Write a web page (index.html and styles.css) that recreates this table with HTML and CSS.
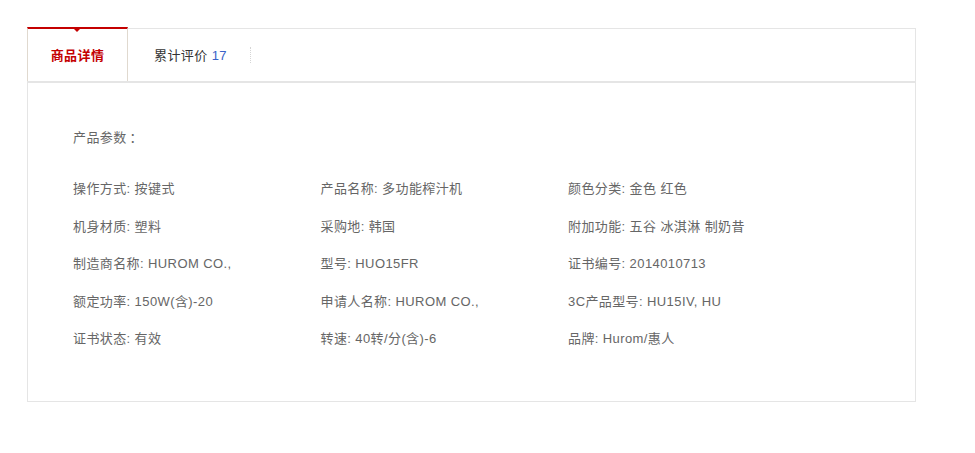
FILE: index.html
```html
<!DOCTYPE html>
<html lang="zh-CN">
<head>
  <meta charset="UTF-8" />
  <title>商品详情</title>
  <link rel="stylesheet" href="styles.css">
</head>
<body>
  <div class="detail">
    <!-- Tab bar -->
    <div class="tabs">
      <a class="tab active">商品详情</a>
      <a class="tab">累计评价 <em class="count">17</em></a>
      <span class="tab-sep"></span>
    </div>

    <!-- Product parameters -->
    <div class="params">
      <p class="params-title">产品参数<span class="colon">：</span></p>
      <ul class="params-list">
        <li>操作方式: 按键式</li>
        <li>产品名称: 多功能榨汁机</li>
        <li>颜色分类: 金色 红色</li>
        <li>机身材质: 塑料</li>
        <li>采购地: 韩国</li>
        <li>附加功能: 五谷 冰淇淋 制奶昔</li>
        <li>制造商名称: HUROM CO.,</li>
        <li>型号: HUO15FR</li>
        <li>证书编号: 2014010713</li>
        <li>额定功率: 150W(含)-20</li>
        <li>申请人名称: HUROM CO.,</li>
        <li>3C产品型号: HU15IV, HU</li>
        <li>证书状态: 有效</li>
        <li>转速: 40转/分(含)-6</li>
        <li>品牌: Hurom/惠人</li>
      </ul>
    </div>
  </div>
</body>
</html>
```

FILE: styles.css
```css
/* Base */
body {
  margin: 0;
  background: #fff;
  font-family: "Liberation Sans", "Noto Sans CJK SC", sans-serif;
  font-size: 13px;
  letter-spacing: 0.4px;
  color: #666;
}
.detail {
  margin: 28px 0 0 27px;
  width: 887px;
  border: 1px solid #e5e5e5;
}
/* Tabs */
.tabs {
  display: flex;
  align-items: center;
  height: 52px;
  border-bottom: 2px solid #e5e5e5;
}
.tab {
  display: block;
  padding: 1px 23px 0 26px;
  line-height: 52px;
  color: #333;
  cursor: pointer;
}
.tab.active {
  position: relative;
  box-sizing: border-box;
  width: 101px;
  height: 54px;
  margin: -2px 0 0 -1px;
  padding: 1px 0 0;
  text-align: center;
  line-height: 52px;
  color: #c40000;
  font-weight: bold;
  background: #fff;
  border-top: 2px solid #c40000;
  border-left: 1px solid #e0d9cf;
  border-right: 1px solid #e0d9cf;
}
.tab.active::after {
  content: "";
  position: absolute;
  top: 0;
  left: 46px;
  border: 3px solid transparent;
  border-top-color: #c40000;
  border-bottom: 0;
}
.count {
  font-style: normal;
  color: #3a62c8;
}
.tab-sep {
  width: 0;
  height: 16px;
  border-right: 1px dotted #d5d5d5;
}
/* Parameter list */
.params {
  padding: 45px 45px 52px;
}
.params-title {
  margin: 0 0 31px;
  height: 20px;
  line-height: 20px;
}
.colon {
  padding-left: 3px;
}
.params-list {
  display: grid;
  grid-template-columns: repeat(3, 247.5px);
  row-gap: 17.5px;
  margin: 0;
  padding: 0;
  list-style: none;
}
.params-list li {
  line-height: 20px;
  white-space: nowrap;
}
```
